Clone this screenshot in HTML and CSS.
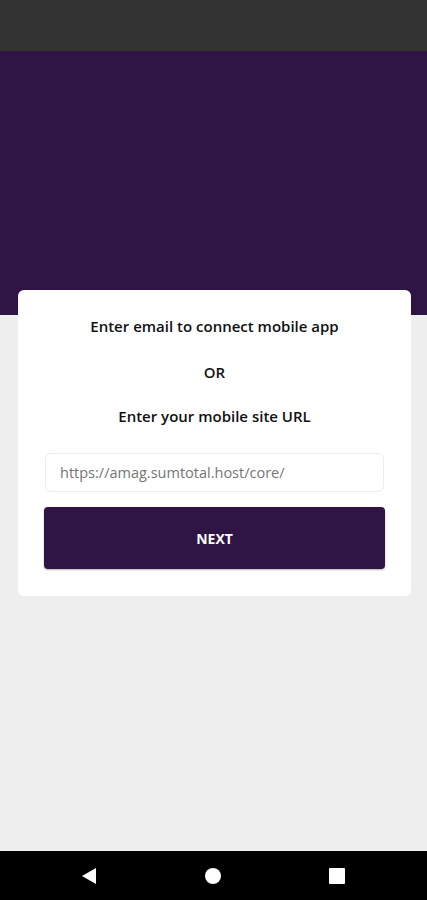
FILE: index.html
```html
<!DOCTYPE html>
<html>
<head>
<meta charset="utf-8">
<link rel="stylesheet" href="styles.css">
</head>
<body>
<div class="screen">
  <div class="statusbar"></div>
  <div class="hero"></div>
  <main class="content">
    <div class="card">
      <p class="label">Enter email to connect mobile app</p>
      <p class="label">OR</p>
      <p class="label">Enter your mobile site URL</p>
      <div class="input">https://amag.sumtotal.host/core/</div>
      <button class="btn">NEXT</button>
    </div>
  </main>
  <nav class="navbar">
    <svg class="nav-icon" width="16" height="16" viewBox="0 0 16 16"><polygon points="15,0 15,16 1,8" fill="#fff"/></svg>
    <svg class="nav-icon" width="16" height="16" viewBox="0 0 16 16"><circle cx="8" cy="8" r="8" fill="#fff"/></svg>
    <svg class="nav-icon" width="16" height="16" viewBox="0 0 16 16"><rect x="0" y="0" width="16" height="16" rx="1" fill="#fff"/></svg>
  </nav>
</div>
</body>
</html>
```
FILE: styles.css
```css
* { box-sizing: border-box; }
html, body { margin: 0; padding: 0; }
body {
  font-family: "Open Sans", "Noto Sans", sans-serif;
  background: #eeeeee;
}
.screen {
  width: 427px;
  height: 900px;
  display: flex;
  flex-direction: column;
  background: #eeeeee;
}
.statusbar {
  height: 51px;
  background: #333333;
  flex: none;
}
.hero {
  height: 264px;
  background: #2e1545;
  flex: none;
}
.content {
  flex: 1;
  padding: 0 16px 0 18px;
  margin-top: -25px;
}
.card {
  background: #fff;
  border-radius: 6px;
  padding: 29px 26px 26px 26px;
  display: flex;
  flex-direction: column;
  height: 306px;
}
.label {
  margin: 0 0 31px 0;
  text-align: center;
  font-size: 15px;
  font-weight: 600;
  color: #111;
  line-height: 15px;
}
.label:nth-child(2) { margin-bottom: 29px; }
.label:nth-child(3) { margin-bottom: 29px; }
.input {
  height: 39px;
  margin: 0 1px 15px 1px;
  border: 1px solid #ececec;
  border-radius: 6px;
  padding: 0 14px;
  display: flex;
  align-items: center;
  font-size: 14.5px;
  color: #757575;
}
.btn {
  height: 62px;
  flex: none;
  border: none;
  border-radius: 4px;
  background: #2e1545;
  color: #fff;
  font-family: "Open Sans", "Noto Sans", sans-serif;
  font-weight: 700;
  font-size: 14px;
  box-shadow: 0 1px 2px rgba(0,0,0,0.3);
}
.navbar {
  height: 49px;
  background: #000;
  flex: none;
  display: flex;
  align-items: center;
  justify-content: space-between;
  padding: 0 82px 0 81px;
}
.nav-icon { display: block; }
```
